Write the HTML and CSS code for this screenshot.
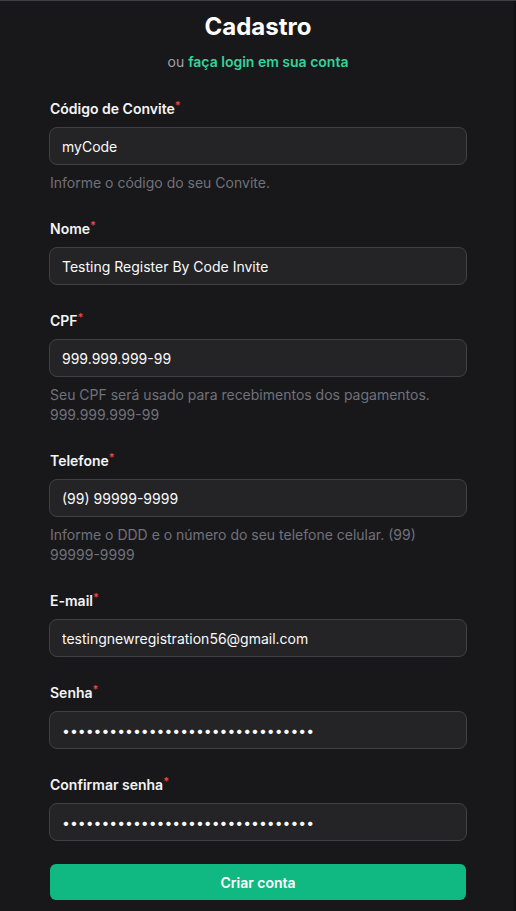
FILE: index.html
```html
<!DOCTYPE html>
<html lang="pt-BR">
<head>
<meta charset="utf-8">
<title>Cadastro</title>
<link rel="stylesheet" href="styles.css">
</head>
<body>
<main class="page">
  <header class="head">
    <h1 class="title">Cadastro</h1>
    <p class="sub">ou <a class="link" href="#">faça login em sua conta</a></p>
  </header>
  <form class="form">
    <div class="field">
      <label class="label">Código de Convite<span class="req">*</span></label>
      <input class="input" type="text" value="myCode">
      <p class="help">Informe o código do seu Convite.</p>
    </div>
    <div class="field">
      <label class="label">Nome<span class="req">*</span></label>
      <input class="input" type="text" value="Testing Register By Code Invite">
    </div>
    <div class="field">
      <label class="label">CPF<span class="req">*</span></label>
      <input class="input" type="text" value="999.999.999-99">
      <p class="help">Seu CPF será usado para recebimentos dos pagamentos. 999.999.999-99</p>
    </div>
    <div class="field">
      <label class="label">Telefone<span class="req">*</span></label>
      <input class="input" type="text" value="(99) 99999-9999">
      <p class="help">Informe o DDD e o número do seu telefone celular. (99) 99999-9999</p>
    </div>
    <div class="field">
      <label class="label">E-mail<span class="req">*</span></label>
      <input class="input" type="email" value="testingnewregistration56@gmail.com">
    </div>
    <div class="field">
      <label class="label">Senha<span class="req">*</span></label>
      <input class="input" type="password" value="aaaaaaaaaaaaaaaaaaaaaaaaaaaaaaaa">
    </div>
    <div class="field">
      <label class="label">Confirmar senha<span class="req">*</span></label>
      <input class="input" type="password" value="aaaaaaaaaaaaaaaaaaaaaaaaaaaaaaaa">
    </div>
    <button class="btn" type="button">Criar conta</button>
  </form>
</main>
</body>
</html>
```

FILE: styles.css
```css
* { box-sizing: border-box; }
html, body { margin: 0; padding: 0; }
body {
  background: #18181b;
  font-family: Inter, "Noto Sans", sans-serif;
  color: #f4f4f5;
  border-top: 1px solid #3f3f46;
  box-shadow: inset -2px 0 0 #111113;
  min-height: 911px;
}
.page {
  width: 418px;
  margin: 0 auto;
  padding-top: 10px;
}
.head { text-align: center; }
.title {
  margin: 0;
  font-size: 24px;
  line-height: 32px;
  font-weight: 700;
  color: #ffffff;
}
.sub {
  margin: 9px 0 0;
  font-size: 14px;
  line-height: 20px;
  color: #a1a1aa;
}
.link {
  color: #34d399;
  font-weight: 600;
  text-decoration: none;
}
.form {
  margin-top: 27px;
  display: flex;
  flex-direction: column;
  gap: 26px;
}
.field { display: flex; flex-direction: column; }
.label {
  font-size: 14px;
  line-height: 20px;
  font-weight: 600;
  color: #f4f4f5;
  margin-bottom: 8px;
  padding-left: 1px;
}
.req {
  color: #ef4444;
  font-size: 11px;
  vertical-align: top;
  line-height: 12px;
}
.input {
  height: 38px;
  width: 100%;
  background: #242427;
  border: 1px solid #3f3f46;
  border-radius: 8px;
  padding: 0 12px;
  font-family: Inter, "Noto Sans", sans-serif;
  font-size: 14px;
  color: #fafafa;
  outline: none;
}
.help {
  margin: 8px 0 0;
  font-size: 14px;
  line-height: 20px;
  color: #71717a;
  padding-left: 1px;
}
.btn {
  margin: -3px 1px 0;
  height: 36px;
  border: none;
  border-radius: 6px;
  background: #10b981;
  color: #ffffff;
  font-family: Inter, "Noto Sans", sans-serif;
  font-size: 14px;
  font-weight: 600;
}
```
